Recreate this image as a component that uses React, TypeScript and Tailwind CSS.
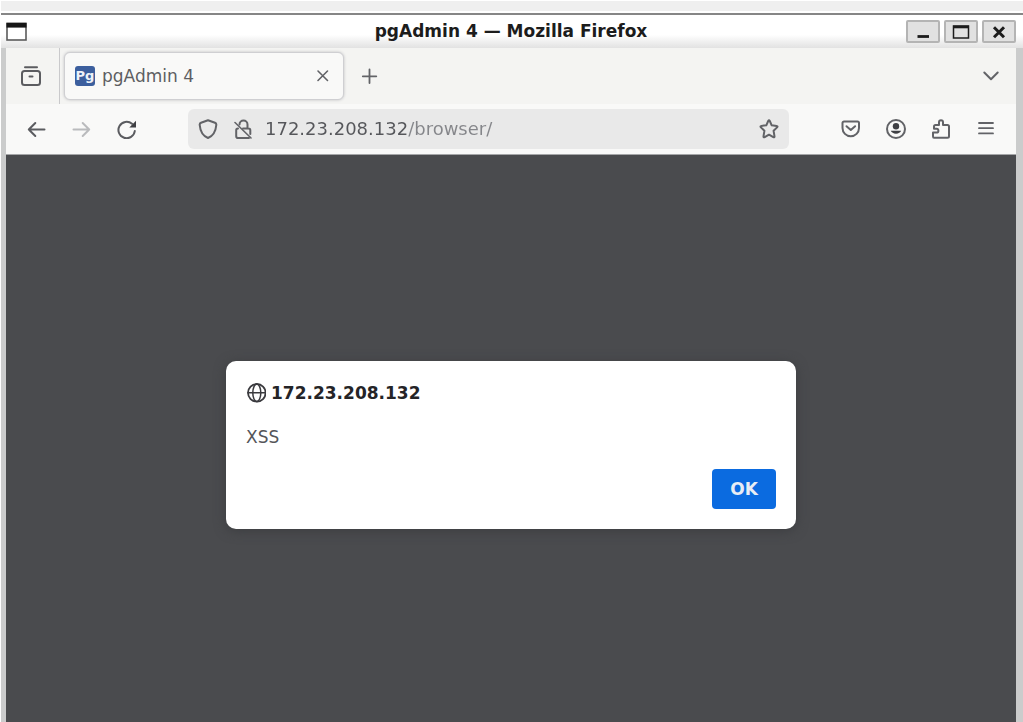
import React, { useState } from 'react';

interface IconButtonProps {
  label: string;
  className?: string;
  children: React.ReactNode;
}

const IconButton: React.FC<IconButtonProps> = ({ label, className = 'h-10 w-[45px]', children }) => (
  <button aria-label={label} className={`flex shrink-0 items-center justify-center ${className}`}>
    {children}
  </button>
);

interface IconProps {
  className?: string;
  children: React.ReactNode;
}

const Icon: React.FC<IconProps> = ({ className = 'text-[#626367]', children }) => (
  <svg
    viewBox="0 0 20 20"
    fill="none"
    stroke="currentColor"
    strokeWidth="2"
    strokeLinecap="round"
    strokeLinejoin="round"
    aria-hidden="true"
    className={`size-5 shrink-0 ${className}`}
  >
    {children}
  </svg>
);

const TitleBar: React.FC = () => {
  const control =
    'flex h-[23px] w-[34px] items-center justify-center rounded-[2px] border-2 border-[#b4b4b4] bg-[#e1e1e1] text-[#1c1c1c]';

  return (
    <header className="flex h-[33px] items-center justify-between bg-linear-to-b from-white from-60% to-[#e2e2e2] pr-[7px] pl-[5px]">
      <div className="flex flex-1">
        <button aria-label="Window menu">
          <svg viewBox="0 0 21 19" className="h-[19px] w-[21px]" aria-hidden="true">
            <rect x="1" y="1.500" width="19" height="16.500" fill="#fff" stroke="#5a5a5a" strokeWidth="1.600" />
            <path d="M0.500 0.800h20v4.800h-20z" fill="#161616" />
          </svg>
        </button>
      </div>
      <h1 className="pb-0.5 text-[17px] leading-6 font-bold text-[#1c1c1c]">pgAdmin 4 — Mozilla Firefox</h1>
      <div className="flex flex-1 justify-end gap-1">
        <button aria-label="Minimize" className={control}>
          <svg viewBox="0 0 20 16" className="h-4 w-5 shrink-0" aria-hidden="true">
            <path d="M4.500 12.500h11.500" stroke="currentColor" strokeWidth="2.800" />
          </svg>
        </button>
        <button aria-label="Maximize" className={control}>
          <svg viewBox="0 0 20 16" className="h-4 w-5 shrink-0" fill="none" stroke="currentColor" aria-hidden="true">
            <rect x="2.500" y="2" width="15" height="12" strokeWidth="1.500" />
            <path d="M2 3h16" strokeWidth="2.600" />
          </svg>
        </button>
        <button aria-label="Close window" className={control}>
          <svg viewBox="0 0 20 16" className="h-4 w-5 shrink-0" aria-hidden="true">
            <path d="M5 3.300l10 10M15 3.300L5 13.300" stroke="currentColor" strokeWidth="3" />
          </svg>
        </button>
      </div>
    </header>
  );
};

const TabStrip: React.FC = () => (
  <div className="flex h-14 items-center bg-[#f4f4f2]">
    <IconButton label="Firefox View" className="h-full w-[53px] pr-1">
      <Icon className="text-[#5b5c60]">
        <path d="M4 1.200h12" />
        <rect x="1" y="5" width="18" height="14" rx="2.500" />
        <path d="M8.500 10.500h3" />
      </Icon>
    </IconButton>
    <div className="h-full w-px bg-[#c9c9cb]" />
    <div className="ml-1 flex h-[48px] w-[280px] items-center rounded-md border border-[#cfcfd2] bg-[#f9f9f8] px-2.5 shadow-[0_0_3px_#bdbdc2]">
      <span className="flex size-5 items-center justify-center rounded-[3px] bg-[#3c5f9e] text-[13px] leading-4 font-bold text-[#eef2f8]">
        Pg
      </span>
      <span className="ml-[7px] flex-1 text-[17px] leading-6 text-[#5d5e62]">pgAdmin 4</span>
      <IconButton label="Close tab" className="size-5">
        <Icon>
          <path d="M5 5l9.500 9.500M14.500 5L5 14.500" strokeWidth="1.600" />
        </Icon>
      </IconButton>
    </div>
    <IconButton label="Open a new tab" className="ml-2 size-9">
      <Icon>
        <path d="M9.500 3.500v13.500M2.800 10.300h13.500" strokeWidth="1.800" />
      </Icon>
    </IconButton>
    <IconButton label="List all tabs" className="mr-2 ml-auto h-9 w-8">
      <Icon>
        <path d="M2.300 6.500l6.700 6.700 6.700-6.700" />
      </Icon>
    </IconButton>
  </div>
);

const NavBar: React.FC = () => {
  const [url, setUrl] = useState('172.23.208.132/browser/');

  return (
    <nav className="flex h-[51px] items-center border-b border-[#a5a6a8] bg-[#f9f9f8] px-2">
      <IconButton label="Back">
        <Icon className="text-[#5b5c60]">
          <path d="M17.500 10.500H1.800M8.300 4L1.800 10.500l6.500 6.500" />
        </Icon>
      </IconButton>
      <IconButton label="Forward">
        <Icon className="text-[#babbbd]">
          <path d="M1.500 10.500h15.700M10.700 4l6.500 6.500-6.500 6.500" />
        </Icon>
      </IconButton>
      <IconButton label="Reload">
        <Icon className="text-[#5b5c60]">
          <path d="M17.800 12A8.200 8.200 0 1 1 15 4.800" />
          <path d="M19 1.800v6.700h-6.700z" fill="#3f4044" stroke="none" />
        </Icon>
      </IconButton>

      <div className="mx-[39px] flex h-10 flex-1 items-center rounded-md bg-[#e9e9e9] px-2.5">
        <IconButton label="Tracking protection" className="size-5">
          <Icon>
            <path d="M10 1.200L17 3.800Q18.500 4.400 18.300 6C17.700 13 15 17 10 19C5 17 2.300 13 1.700 6Q1.500 4.400 3 3.800z" />
          </Icon>
        </IconButton>
        <IconButton label="Connection is not secure" className="ml-[15px] size-5">
          <Icon>
            <path d="M6.500 5.500a4 4 0 0 1 8 0V9.500M10 9.500h5.500a1.800 1.800 0 0 1 1.800 1.800V15M16 19H5a1.800 1.800 0 0 1-1.800-1.800V11.300A1.800 1.800 0 0 1 5 9.500" />
            <path d="M2 3.500l16 15.500" strokeWidth="1.600" />
          </Icon>
        </IconButton>
        <input
          type="text"
          aria-label="Address"
          value={url}
          onChange={(e) => setUrl(e.target.value)}
          className="ml-3 min-w-0 flex-1 bg-linear-to-r from-[#55565a] from-[143px] to-[#85868a] to-[143px] bg-clip-text text-[18px] leading-6 text-transparent outline-none"
        />
        <IconButton label="Bookmark this page" className="size-5">
          <Icon>
            <path d="M9.200 2Q10 .6 10.800 2l1.900 4.300 4.900.6q1.500.3.500 1.500l-3.500 3.400.9 5.500q.1 1.500-1.200.9L10 15.700l-4.300 2.500q-1.300.6-1.200-.9l.9-5.500-3.500-3.400q-1-1.200.5-1.500l4.900-.6z" />
          </Icon>
        </IconButton>
      </div>

      <IconButton label="Save to Pocket">
        <Icon>
          <path d="M3 2.500h13.500a1.500 1.500 0 0 1 1.500 1.500v5a8.200 8.200 0 0 1-16.500 0V4A1.500 1.500 0 0 1 3 2.500z" />
          <path d="M5.500 7.200l4.300 3.800 4.300-3.800" />
        </Icon>
      </IconButton>
      <IconButton label="Account">
        <Icon>
          <circle cx="10" cy="10" r="9" />
          <circle cx="10" cy="7.200" r="3.200" fill="#3f4044" stroke="none" />
          <path d="M4.800 11.800h10.400a5.500 4.200 0 0 1-10.400 0z" fill="#3f4044" stroke="none" />
        </Icon>
      </IconButton>
      <IconButton label="Extensions">
        <Icon>
          <path d="M3 18.800h13.500a1.500 1.500 0 0 0 1.500-1.500V7.500A1.500 1.500 0 0 0 16.500 6H12V3.200a2 2 0 0 0-4 0V6H4.500A1.500 1.500 0 0 0 3 7.500v2.300h2.500a1.900 1.900 0 0 1 0 3.800H2v3.700Q2 18.800 3 18.800z" />
        </Icon>
      </IconButton>
      <IconButton label="Open application menu">
        <Icon>
          <path d="M3 4h14M3 9.200h14M3 14.400h14" strokeWidth="1.800" />
        </Icon>
      </IconButton>
    </nav>
  );
};

const AlertDialog: React.FC = () => (
  <div
    role="alertdialog"
    aria-labelledby="alert-origin"
    aria-describedby="alert-message"
    className="flex w-[570px] flex-col rounded-[10px] bg-white p-5 shadow-[0_2px_12px_#3c3d40]"
  >
    <div className="flex items-center gap-[5px]">
      <Icon className="text-[#3a3a3e]">
        <circle cx="10.800" cy="9.800" r="8.800" strokeWidth="1.800" />
        <ellipse cx="10.800" cy="9.800" rx="4" ry="8.800" strokeWidth="1.500" />
        <path d="M2 9.800h17.600" strokeWidth="1.500" />
      </Icon>
      <h2 id="alert-origin" className="text-[17px] leading-6 font-bold text-[#242427]">172.23.208.132</h2>
    </div>
    <p id="alert-message" className="mt-5 text-[17px] leading-6 text-[#55565a]">XSS</p>
    <button className="mt-5 h-10 w-16 self-end rounded-sm bg-[#0b6be0] text-[17px] leading-6 font-bold text-[#e8edf5]">
      OK
    </button>
  </div>
);

export default function App() {
  return (
    <div className="flex min-h-screen flex-col bg-white pt-px pl-px font-['DejaVu_Sans',sans-serif]">
      <div className="h-2.5 bg-[#efefef]" />
      <div className="mt-0.5 h-0.5 bg-[#868686]" />
      <TitleBar />
      <div className="flex flex-1 flex-col border-r-[7px] border-l-[5px] border-[#cbcccc]">
        <TabStrip />
        <NavBar />
        <main className="flex flex-1 items-start justify-center bg-[#4a4b4e] pt-[206px]">
          <AlertDialog />
        </main>
      </div>
    </div>
  );
}
